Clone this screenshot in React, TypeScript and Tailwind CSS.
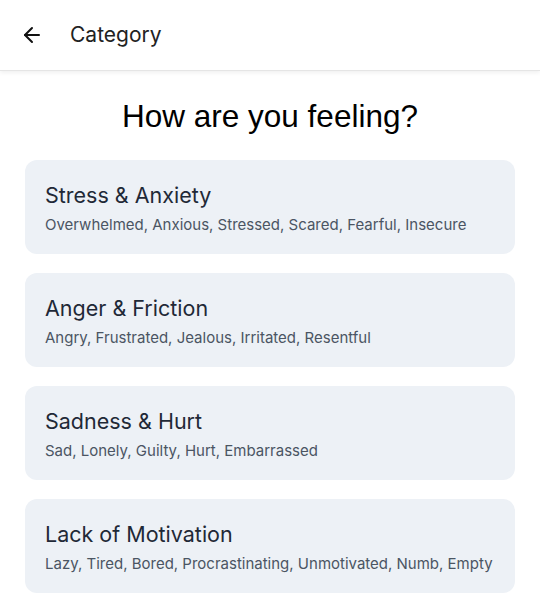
import { ArrowLeft } from 'lucide-react';

const categories = [
  { title: 'Stress & Anxiety', feelings: 'Overwhelmed, Anxious, Stressed, Scared, Fearful, Insecure' },
  { title: 'Anger & Friction', feelings: 'Angry, Frustrated, Jealous, Irritated, Resentful' },
  { title: 'Sadness & Hurt', feelings: 'Sad, Lonely, Guilty, Hurt, Embarrassed' },
  { title: 'Lack of Motivation', feelings: 'Lazy, Tired, Bored, Procrastinating, Unmotivated, Numb, Empty' },
];

export default function App() {
  return (
    <div className="min-h-screen bg-white font-['Inter',sans-serif]">
      {/* header */}
      <header className="h-[71px] flex items-center px-5 border-b border-[#e5e5e5] shadow-[0_2px_4px_rgba(0,0,0,0.06)]">
        <ArrowLeft className="w-6 h-6 text-[#111]" strokeWidth={2} />
        <span className="ml-[26px] text-[21px] text-[#222]">Category</span>
      </header>

      <h1 className="mt-[27px] text-center text-[31.5px] leading-9 text-black font-['Liberation_Sans',Arial,sans-serif]">
        How are you feeling?
      </h1>

      <div className="mt-[26px] px-[25px] flex flex-col gap-[19px]">
        {categories.map(c => (
          <div key={c.title} className="h-[94px] rounded-xl bg-[#edf1f6] px-5 pt-[21px]">
            <div className="text-[21.5px] leading-7 text-[#1f2937]">{c.title}</div>
            <div className="mt-[6px] text-[15px] leading-5 text-[#4b5563]">{c.feelings}</div>
          </div>
        ))}
      </div>
    </div>
  );
}
